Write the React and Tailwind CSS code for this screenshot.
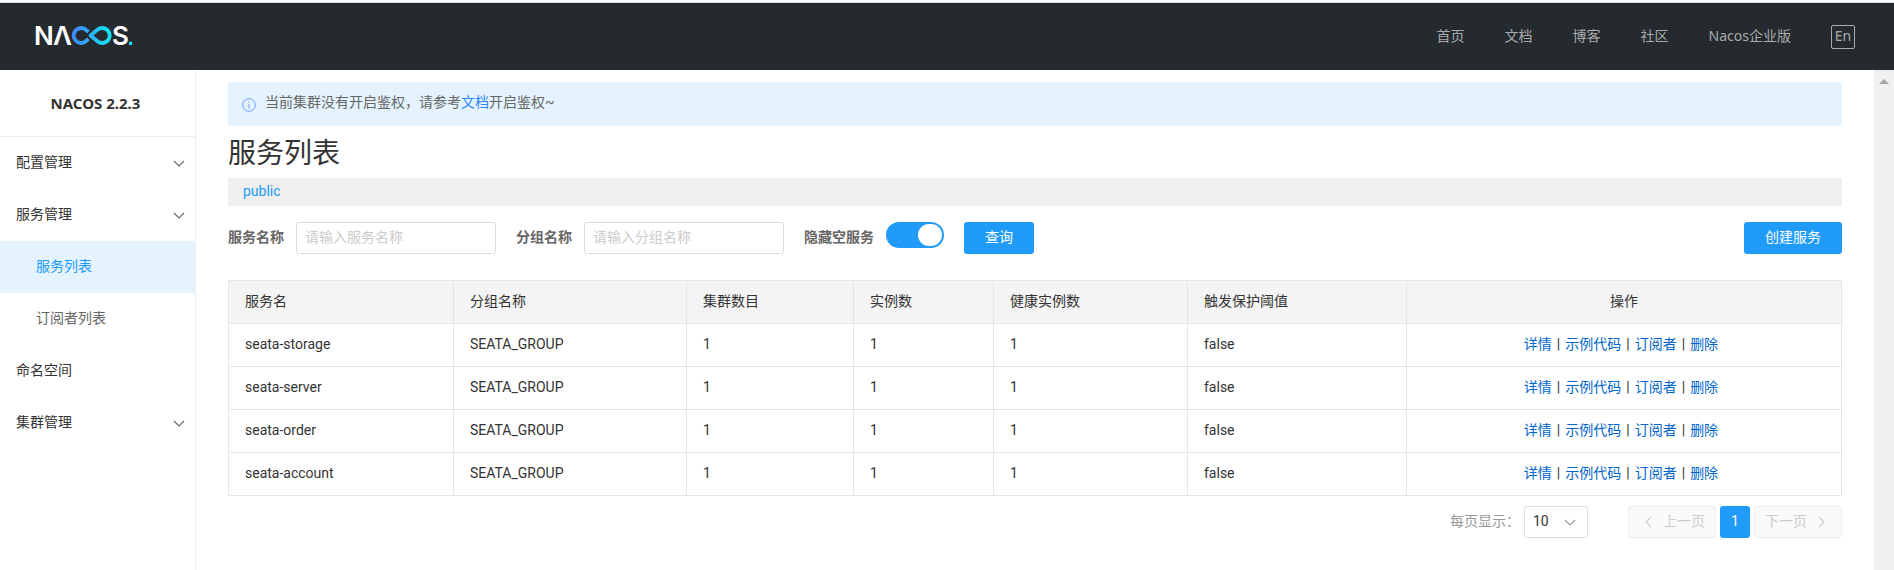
import React, { useState } from 'react';

const NAV = ['首页', '文档', '博客', '社区', 'Nacos企业版'];

const MENU = [
  { label: '配置管理', expandable: true },
  { label: '服务管理', expandable: true },
  { label: '服务列表', child: true, active: true },
  { label: '订阅者列表', child: true },
  { label: '命名空间' },
  { label: '集群管理', expandable: true },
];

const COLUMNS = [
  { label: '服务名', width: 'w-[225px]' },
  { label: '分组名称', width: 'w-[233px]' },
  { label: '集群数目', width: 'w-[167px]' },
  { label: '实例数', width: 'w-[140px]' },
  { label: '健康实例数', width: 'w-[194px]' },
  { label: '触发保护阈值', width: 'w-[219px]' },
];

const SERVICES = ['seata-storage', 'seata-server', 'seata-order', 'seata-account'].map((name) => ({
  name,
  group: 'SEATA_GROUP',
  clusters: 1,
  instances: 1,
  healthy: 1,
  threshold: 'false',
}));

const ACTIONS = ['详情', '示例代码', '订阅者', '删除'];

function Chevron({ className, d = 'M1 4l5 5 5-5' }) {
  return (
    <svg viewBox="0 0 12 12" className={className} fill="none" stroke="currentColor" strokeWidth="1.1" aria-hidden="true">
      <path d={d} />
    </svg>
  );
}

function Logo() {
  return (
    <svg width="106" height="36" viewBox="-4 -7 106 36" role="img" aria-label="NACOS">
      <defs>
        <linearGradient id="loop" gradientUnits="userSpaceOnUse" x1="36" y1="0" x2="75" y2="0">
          <stop offset="0" stopColor="#3f86ff" />
          <stop offset="1" stopColor="#17e3f3" />
        </linearGradient>
      </defs>
      <g fill="#fff" fontFamily="Inter, sans-serif" fontWeight="600" fontSize="26">
        <text x="-2" y="19">N</text>
        <text x="17" y="19">Λ</text>
        <text x="76" y="19">S</text>
      </g>
      <g fill="none" stroke="url(#loop)" strokeWidth="3.8">
        <path d="M52.4 6L50.9 4.7A7.5 7.5 0 1 0 50.9 14.3L52.4 13" />
        <path d="M54.5 9.5L61.4 3.75A7.5 7.5 0 1 1 61.4 15.25Z" strokeLinejoin="round" />
      </g>
      <rect x="93" y="15.8" width="3.2" height="3.2" rx="0.6" fill="#17e3f3" />
    </svg>
  );
}

function Header() {
  return (
    <header className="flex h-[67px] shrink-0 items-center justify-between bg-[#252a2f] pr-[39px] pl-8">
      <a href="#home">
        <Logo />
      </a>
      <nav className="flex items-center gap-10 text-sm text-[#a8aaac]">
        {NAV.map((item) => (
          <a key={item} href="#nav" className="pb-0.5">{item}</a>
        ))}
        <button type="button" className="size-6 rounded-xs border border-[#a8aaac] pb-0.5 leading-5">
          En
        </button>
      </nav>
    </header>
  );
}

function Sidebar() {
  return (
    <aside className="w-[196px] shrink-0 border-r border-[#eee]">
      <h2 className="flex h-[67px] items-center justify-center border-b border-[#eee] pr-1 text-[15px] font-bold text-[#333]">
        NACOS 2.2.3
      </h2>
      <ul>
        {MENU.map((item) => (
          <li key={item.label}>
            <a
              href="#menu"
              className={
                'flex h-[52px] items-center justify-between pr-[10px] text-sm ' +
                (item.child ? 'pl-9 ' : 'pl-4 ') +
                (item.active ? 'bg-[#e4f3fe] text-[#209bfa]' : item.child ? 'text-[#666]' : 'text-[#333]')
              }
            >
              <span className="pb-0.5">{item.label}</span>
              {item.expandable && <Chevron className="size-3 text-[#666]" />}
            </a>
          </li>
        ))}
      </ul>
    </aside>
  );
}

function Field({ id, label, placeholder }) {
  return (
    <div className="flex items-center gap-3">
      <label htmlFor={id} className="pb-0.5 font-bold text-[#666]">{label}</label>
      <input
        id={id}
        type="text"
        placeholder={placeholder}
        className="h-8 w-[200px] rounded-[3px] border border-[#dcdee3] px-2 pb-0.5 outline-none placeholder:text-[#ccc]"
      />
    </div>
  );
}

function Filters() {
  const [hideEmpty, setHideEmpty] = useState(true);
  return (
    <form className="mt-4 flex items-start justify-between" onSubmit={(e) => e.preventDefault()}>
      <div className="flex items-center gap-5">
        <Field id="service-name" label="服务名称" placeholder="请输入服务名称" />
        <Field id="group-name" label="分组名称" placeholder="请输入分组名称" />
        <div className="flex h-8 items-start gap-3">
          <label htmlFor="hide-empty" className="font-bold leading-[30px] text-[#666]">隐藏空服务</label>
          <input
            id="hide-empty"
            type="checkbox"
            role="switch"
            checked={hideEmpty}
            onChange={(e) => setHideEmpty(e.target.checked)}
            className="flex h-[26px] w-[58px] appearance-none rounded-full border-2 border-[#ccc] bg-[#ccc] before:h-[22px] before:w-6 before:rounded-full before:bg-white checked:justify-end checked:border-[#209bfa] checked:bg-[#209bfa]"
          />
        </div>
        <button type="submit" className="h-8 w-[70px] rounded-[3px] bg-[#209bfa] pb-0.5 text-white">查询</button>
      </div>
      <button type="button" className="h-8 w-[98px] rounded-[3px] bg-[#209bfa] pb-0.5 text-white">创建服务</button>
    </form>
  );
}

function ServiceTable() {
  return (
    <table className="mt-[26px] w-full table-fixed border-collapse text-left text-[#333]">
      <thead className="bg-[#f4f4f4]">
        <tr className="h-[43px]">
          {COLUMNS.map((c) => (
            <th key={c.label} className={`${c.width} border border-[#e6e6e6] px-4 pb-0.5 font-normal`}>{c.label}</th>
          ))}
          <th className="border border-[#e6e6e6] px-4 pb-0.5 text-center font-normal">操作</th>
        </tr>
      </thead>
      <tbody>
        {SERVICES.map((row) => (
          <tr key={row.name} className="h-[43px]">
            {Object.values(row).map((value, i) => (
              <td key={i} className="border border-[#e6e6e6] px-4 pb-0.5">{value}</td>
            ))}
            <td className="border border-[#e6e6e6] px-4 pb-0.5">
              <div className="flex justify-center gap-[5px] pr-[6px] text-[#0066cc]">
                {ACTIONS.map((action, i) => (
                  <React.Fragment key={action}>
                    {i > 0 && <span className="text-[#333]">|</span>}
                    <a href="#action">{action}</a>
                  </React.Fragment>
                ))}
              </div>
            </td>
          </tr>
        ))}
      </tbody>
    </table>
  );
}

function Pager() {
  const step = 'flex h-8 w-[88px] items-center gap-[10px] rounded-[3px] border border-[#eee] bg-[#fafafa] px-[10px] text-[#ccc]';
  return (
    <div className="mt-[10px] flex items-center justify-end">
      <label htmlFor="page-size" className="pb-0.5 text-[#999]">每页显示：</label>
      <div className="relative ml-1">
        <select
          id="page-size"
          defaultValue="10"
          className="h-8 w-16 appearance-none rounded-[3px] border border-[#dcdee3] bg-white px-2 pb-0.5 text-[#333]"
        >
          <option>10</option>
          <option>20</option>
          <option>50</option>
        </select>
        <Chevron className="pointer-events-none absolute top-[10px] right-3 size-3 text-[#999]" />
      </div>
      <div className="ml-10 flex gap-1">
        <button type="button" disabled className={`${step} justify-end`}>
          <Chevron className="size-3" d="M10 1L5 6l5 5" />
          <span className="pb-0.5">上一页</span>
        </button>
        <button type="button" className="h-8 w-[30px] rounded-[3px] bg-[#209bfa] pb-0.5 text-white">1</button>
        <button type="button" disabled className={step}>
          <span className="pb-0.5">下一页</span>
          <Chevron className="size-3" d="M2 1l5 5-5 5" />
        </button>
      </div>
    </div>
  );
}

export default function App() {
  return (
    <div className="flex min-h-screen flex-col bg-white font-['Noto_Sans','Noto_Sans_CJK_SC',sans-serif]">
      <div className="h-[3px] shrink-0 border-b border-[#ddd]" />
      <Header />
      <div className="flex flex-1">
        <Sidebar />
        <main className="min-w-0 flex-1 px-8 pt-3 font-[Roboto,'Noto_Sans_CJK_SC',sans-serif] text-sm">
          <div className="flex h-11 items-center gap-[9px] rounded-[3px] bg-[#e4f3fe] px-[14px] text-[#666]">
            <svg viewBox="0 0 14 14" className="mt-0.5 size-[14px]" fill="none" stroke="#6c9cff" aria-hidden="true">
              <circle cx="7" cy="7" r="6.3" />
              <path d="M7 6v4.5M7 3.6v1.2" />
            </svg>
            <p className="pb-1">
              当前集群没有开启鉴权，请参考<a href="#docs" className="text-[#2f86ff]">文档</a>开启鉴权~
            </p>
          </div>
          <h1 className="mt-1 h-12 text-[28px] leading-[48px] text-[#333]">服务列表</h1>
          <div className="h-7 bg-[#efefef] px-[15px] leading-[26px]">
            <a href="#public" className="text-[#209bfa]">public</a>
          </div>
          <Filters />
          <ServiceTable />
          <Pager />
        </main>
        <div className="flex w-5 shrink-0 justify-center bg-[#f0f0f0] pt-[9px]">
          <svg width="10" height="5" viewBox="0 0 10 5" fill="#a3a3a3" aria-hidden="true">
            <path d="M0 5L5 0l5 5z" />
          </svg>
        </div>
      </div>
    </div>
  );
}
